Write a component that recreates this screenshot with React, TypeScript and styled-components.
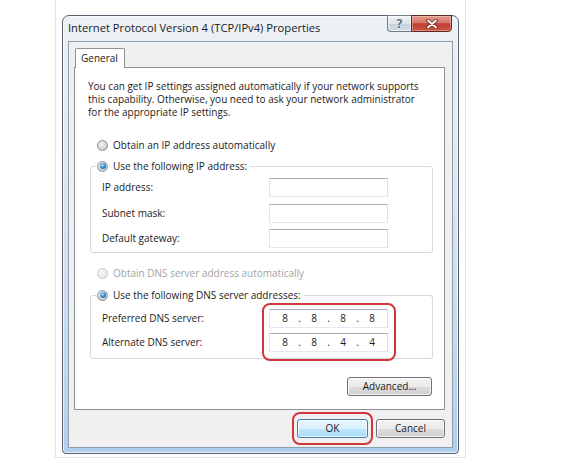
import React from "react";
import styled, { createGlobalStyle } from "styled-components";

const GlobalStyle = createGlobalStyle`
  body {
    margin: 0;
    background: #fff;
    font-family: "Open Sans", "Liberation Sans", sans-serif;
    color: #1b1b1b;
  }
`;

function App() {
  return (
    <>
      <GlobalStyle />
      <Page>
        <Window>
          <TitleBar>
            <TitleText>Internet Protocol Version 4 (TCP/IPv4) Properties</TitleText>
            <CaptionButtons>
              <HelpButton>?</HelpButton>
              <CloseButton>
                <svg width="14" height="10" viewBox="0 0 14 10">
                  <path d="M3 1.5 L11 8.5 M11 1.5 L3 8.5" stroke="#5a1d16" strokeWidth="3.6" strokeLinecap="round" />
                  <path d="M3 1.5 L11 8.5 M11 1.5 L3 8.5" stroke="#fff" strokeWidth="2" strokeLinecap="round" />
                </svg>
              </CloseButton>
            </CaptionButtons>
          </TitleBar>

          <ClientArea>
            <TabStrip>
              <Tab>General</Tab>
            </TabStrip>
            <TabPanel>
              <Intro>
                You can get IP settings assigned automatically if your network supports
                <br />
                this capability. Otherwise, you need to ask your network administrator
                <br />
                for the appropriate IP settings.
              </Intro>

              <OptionRow>
                <Radio />
                Obtain an IP address automatically
              </OptionRow>

              <GroupBox $top={5}>
                <Legend>
                  <LegendRow>
                    <Radio $checked />
                    Use the following IP address:
                  </LegendRow>
                </Legend>
                <FieldGrid>
                  <FieldLabel>IP address:</FieldLabel>
                  <TextBox />
                  <FieldLabel>Subnet mask:</FieldLabel>
                  <TextBox />
                  <FieldLabel>Default gateway:</FieldLabel>
                  <TextBox />
                </FieldGrid>
              </GroupBox>

              <OptionRow $top={12} $disabled>
                <Radio $disabled />
                Obtain DNS server address automatically
              </OptionRow>

              <GroupBox $top={6}>
                <Legend>
                  <LegendRow>
                    <Radio $checked />
                    Use the following DNS server addresses:
                  </LegendRow>
                </Legend>
                <DnsRow>
                  <LabelColumn>
                    <FieldLabel>Preferred DNS server:</FieldLabel>
                    <FieldLabel>Alternate DNS server:</FieldLabel>
                  </LabelColumn>
                  <DnsHighlight>
                    <TextBox>
                      <IpValue parts={["8", "8", "8", "8"]} />
                    </TextBox>
                    <TextBox>
                      <IpValue parts={["8", "8", "4", "4"]} />
                    </TextBox>
                  </DnsHighlight>
                </DnsRow>
              </GroupBox>

              <PanelFooter>
                <Button $width={85}>Advanced...</Button>
              </PanelFooter>
            </TabPanel>

            <DialogButtons>
              <ButtonHighlight>
                <Button $width={71} $default>
                  OK
                </Button>
              </ButtonHighlight>
              <Button $width={69}>Cancel</Button>
            </DialogButtons>
          </ClientArea>
        </Window>
      </Page>
    </>
  );
}

function IpValue({ parts }: { parts: string[] }) {
  return (
    <IpBox>
      {parts.map((p, i) => (
        <React.Fragment key={i}>
          {i > 0 && <IpDot>.</IpDot>}
          <IpField>{p}</IpField>
        </React.Fragment>
      ))}
    </IpBox>
  );
}

export default App;

const Page = styled.div`
  box-sizing: border-box;
  width: 411px;
  height: 458px;
  margin-left: 55px;
  padding: 15px 0 0 6px;
  border: 1px solid #e4e4e4;
  border-top: none;
`;

const Window = styled.div`
  box-sizing: border-box;
  width: 397px;
  height: 439px;
  display: flex;
  flex-direction: column;
  padding: 0 5px 5px 5px;
  border: 1px solid #56616d;
  border-radius: 7px 7px 4px 4px;
  background: linear-gradient(180deg, #eef1f5 0%, #e3e9f0 30%, #c6daee 75%, #afcfec 100%);
  box-shadow: inset 0 0 0 1px rgba(255, 255, 255, 0.7);
`;

const TitleBar = styled.div`
  height: 25px;
  flex: none;
  display: flex;
  align-items: flex-start;
  justify-content: space-between;
`;

const TitleText = styled.div`
  font-size: 11.2px;
  line-height: 14px;
  margin-top: 5px;
  color: #1a1a1a;
  white-space: nowrap;
`;

const CaptionButtons = styled.div`
  display: flex;
  margin: -1px 1px 0 0;
`;

const HelpButton = styled.div`
  box-sizing: border-box;
  width: 24px;
  height: 17px;
  border: 1px solid #6f7c8a;
  border-right: none;
  border-radius: 0 0 0 4px;
  background: linear-gradient(180deg, #f1f4f7 0%, #dde4ec 50%, #c7d1dc 51%, #d3dde8 100%);
  box-shadow: inset 0 0 0 1px rgba(255, 255, 255, 0.6);
  color: #6c7a8a;
  font-family: "DejaVu Sans", sans-serif;
  font-weight: bold;
  font-size: 12.5px;
  line-height: 15px;
  text-align: center;
  text-shadow: 0 0 1px #fff, 0 0 1px #fff;
`;

const CloseButton = styled.div`
  box-sizing: border-box;
  width: 41px;
  height: 17px;
  border: 1px solid #5c2a24;
  border-radius: 0 0 4px 0;
  background: linear-gradient(180deg, #e39a8c 0%, #d6786a 45%, #c23c33 52%, #cd5444 100%);
  box-shadow: inset 0 0 0 1px rgba(255, 220, 210, 0.4);
  display: flex;
  align-items: center;
  justify-content: center;
`;

const ClientArea = styled.div`
  flex: 1;
  display: flex;
  flex-direction: column;
  padding: 6px 7px 0 5px;
  border: 1px solid #8f9cab;
  background: #f0f0f0;
`;

const TabStrip = styled.div`
  display: flex;
  padding-left: 1px;
  margin-bottom: -1px;
  position: relative;
  z-index: 1;
`;

const Tab = styled.div`
  box-sizing: border-box;
  width: 50px;
  height: 20px;
  padding-left: 5px;
  border: 1px solid #8e9298;
  border-bottom: none;
  border-radius: 2px 2px 0 0;
  background: #fff;
  font-size: 10px;
  line-height: 18px;
`;

const TabPanel = styled.div`
  display: flex;
  flex-direction: column;
  padding-bottom: 13px;
  border: 1px solid #8e9298;
  background: #fff;
  font-size: 10px;
`;

const Intro = styled.p`
  margin: 12px 0 0 13px;
  line-height: 13px;
  white-space: nowrap;
`;

const OptionRow = styled.div<{ $top?: number; $disabled?: boolean }>`
  display: flex;
  align-items: center;
  gap: 5px;
  height: 16px;
  margin: ${(p) => p.$top ?? 18}px 0 0 22px;
  color: ${(p) => (p.$disabled ? "#a3a3a3" : "inherit")};
  white-space: nowrap;
`;

const LegendRow = styled.div`
  display: flex;
  align-items: center;
  gap: 5px;
  height: 16px;
  white-space: nowrap;
`;

const Radio = styled.span<{ $checked?: boolean; $disabled?: boolean }>`
  box-sizing: border-box;
  position: relative;
  flex: none;
  width: 11px;
  height: 11px;
  border-radius: 50%;
  border: 1px solid ${(p) => (p.$disabled ? "#c6c8ca" : "#8b8e91")};
  background: ${(p) =>
    p.$disabled
      ? "radial-gradient(circle at 40% 35%, #f6f6f6 0%, #e2e2e2 100%)"
      : "radial-gradient(circle at 40% 35%, #f4f4f4 0%, #d6d6d6 55%, #bdbdbd 100%)"};

  &::after {
    content: "";
    display: ${(p) => (p.$checked ? "block" : "none")};
    position: absolute;
    inset: 1.5px;
    border-radius: 50%;
    background: radial-gradient(circle at 40% 35%, #b9e6ff 0%, #3a8fd2 45%, #0f4c86 100%);
  }
`;

const GroupBox = styled.fieldset<{ $top: number }>`
  margin: ${(p) => p.$top}px 11px 0 15px;
  padding: 0;
  border: 1px solid #d5d9dd;
  border-radius: 3px;
  min-width: 0;
`;

const Legend = styled.legend`
  margin-left: 5px;
  padding: 0 3px 0 1px;
`;

const FieldGrid = styled.div`
  display: grid;
  grid-template-columns: 167px 119px;
  grid-auto-rows: 19px;
  row-gap: 6.5px;
  padding: 4px 0 4px 11px;
`;

const FieldLabel = styled.div`
  height: 19px;
  line-height: 19px;
  white-space: nowrap;
`;

const TextBox = styled.div`
  box-sizing: border-box;
  width: 119px;
  height: 19px;
  border: 1px solid;
  border-color: #abadb3 #dbdfe6 #e3e9ef #e2e3ea;
  background: #fff;
`;

const DnsRow = styled.div`
  display: flex;
  padding-left: 11px;
`;

const LabelColumn = styled.div`
  width: 160px;
  display: flex;
  flex-direction: column;
  gap: 5px;
  padding-top: 6px;
`;

const Annotation = styled.div`
  border: 2px solid #d2363d;
  border-radius: 8px;
`;

const DnsHighlight = styled(Annotation)`
  display: flex;
  flex-direction: column;
  gap: 5px;
  padding: 4px 6px 7px 5px;
  margin-bottom: -3px;
`;

const ButtonHighlight = styled(Annotation)`
  padding: 5px 3px;
`;

const IpBox = styled.div`
  display: flex;
  padding-left: 3px;
  line-height: 17px;
`;

const IpField = styled.span`
  width: 24px;
  text-align: center;
`;

const IpDot = styled.span`
  width: 5px;
  text-align: center;
`;

const PanelFooter = styled.div`
  display: flex;
  justify-content: flex-end;
  margin: 18px 12px 0 0;
`;

const DialogButtons = styled.div`
  display: flex;
  justify-content: flex-end;
  align-items: center;
  gap: 3px;
  margin-top: 2px;
`;

const Button = styled.div<{ $width: number; $default?: boolean }>`
  box-sizing: border-box;
  width: ${(p) => p.$width}px;
  height: 19px;
  border: 1px solid ${(p) => (p.$default ? "#3c7fb1" : "#707070")};
  border-radius: 3px;
  background: ${(p) =>
    p.$default
      ? "linear-gradient(180deg, #eaf6fd 0%, #d9f0fc 50%, #bee6fd 51%, #a7d9f5 100%)"
      : "linear-gradient(180deg, #f2f2f2 0%, #ebebeb 50%, #dddddd 51%, #cfcfcf 100%)"};
  box-shadow: inset 0 0 0 1px rgba(255, 255, 255, 0.75);
  font-size: 10px;
  line-height: 17px;
  text-align: center;
  color: #1b1b1b;
`;
